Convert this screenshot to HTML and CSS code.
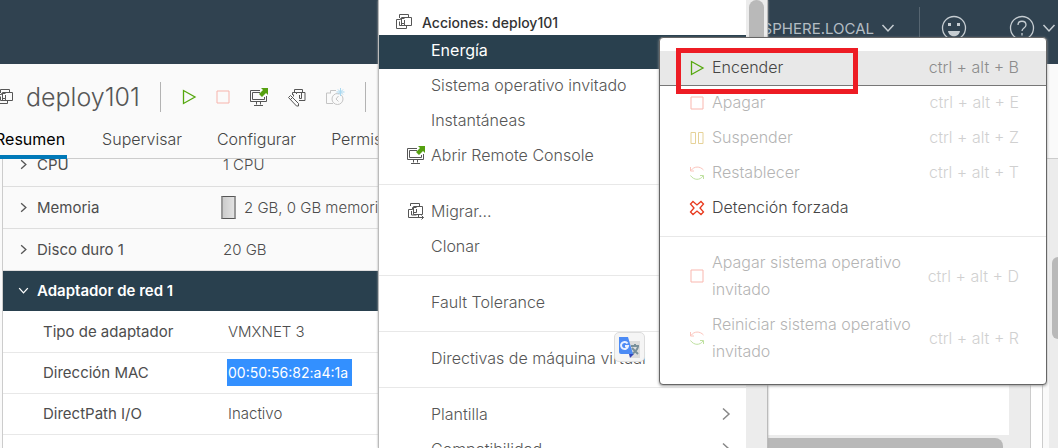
FILE: index.html
```html
<!DOCTYPE html>
<html lang="es">
<head>
<meta charset="utf-8">
<title>deploy101</title>
<link rel="stylesheet" href="styles.css">
</head>
<body>
<svg class="defs" aria-hidden="true">
  <symbol id="vm" viewBox="0 0 18 18"><path d="M4.500 5V1.500h9V4M1.500 6.500h4V5.500h4M1.500 6.500v9h10v-3M6.500 4.500h10v8h-10zM9.500 7v3.500h-3M4.500 8.500v4h4.500M9.500 10.500v2"/></symbol>
  <symbol id="play" viewBox="0 0 16 16"><path d="M2.500 1.500v13L14 8z"/></symbol>
  <symbol id="stop" viewBox="0 0 16 16"><path d="M2 2h12v12H2z"/></symbol>
  <symbol id="pause" viewBox="0 0 16 16"><path d="M2 2.500h4.500v11H2zM9.500 2.500H14v11H9.500z"/></symbol>
  <symbol id="reset" viewBox="0 0 16 16"><g stroke="#f76f5b"><path d="M2 5.500C5 1 11 1 14.500 5M1.500 2v4H5"/></g><g stroke="#60b515"><path d="M1.500 10.500C5 15.500 11 15.500 14 11M11 10.500h3.500v3.500"/></g></symbol>
  <symbol id="kill" viewBox="0 0 16 16"><path d="M4 1.500 8 5l4-3.500L14.500 4 11 8l3.500 4L12 14.500 8 11l-4 3.500L1.500 12 5 8 1.500 4z"/></symbol>
  <symbol id="console" viewBox="0 0 20 20"><path d="M11 3.500H1.500v11h16V9M11 5.500H3.500v7h12V10M7.500 15v2.500M11.500 15v2.500M5 18.500h9"/><path class="arrow" d="M12 1h7v7l-2-2-4 4-3-3 4-4z"/></symbol>
  <symbol id="down" viewBox="0 0 14 10"><path d="M1.500 2 7 8l5.500-6"/></symbol>
  <symbol id="right" viewBox="0 0 10 14"><path d="M2 1.500 8 7l-6 5.500"/></symbol>
</svg>

<div class="app">
  <header class="topbar">
    <button class="user">SPHERE.LOCAL <svg class="chev"><use href="#down"/></svg></button>
    <span class="bar-line"></span>
    <button class="feedback" aria-label="Comentarios"><svg class="round" viewBox="0 0 26 26"><circle cx="13" cy="13" r="11.500"/><path class="solid" d="M7 16h12c-1 7-11 7-12 0zM7 8h3v3H7zM16 8h3v3h-3z"/></svg></button>
    <button class="help" aria-label="Ayuda"><svg class="round" viewBox="0 0 26 26"><circle cx="13" cy="13" r="11.500"/><path d="M9 10c0-5 8-5 8 0 0 3-4 3-4 6M13 18v2.500"/></svg><svg class="chev"><use href="#down"/></svg></button>
  </header>

  <div class="titlebar">
    <svg class="vm-icon"><use href="#vm"/></svg>
    <h1>deploy101</h1>
    <div class="tools">
      <button aria-label="Encender"><svg class="i16 green"><use href="#play"/></svg></button>
      <button aria-label="Apagar" disabled><svg class="i16 red pale"><use href="#stop"/></svg></button>
      <button aria-label="Abrir consola"><svg class="i20"><use href="#console"/></svg></button>
      <button aria-label="Editar"><svg class="i20" viewBox="0 0 20 20"><path d="M7.500 5V2.500h8V5M5.500 8V5.500h4M9.500 7V5.500h8.500v8h-6M12.500 8v3.500h2M14.500 5.500v6M1.500 10.500l2-2 8 8v2.500H9.500zM3.500 12.500l2-2M3.500 13v-1M6.500 7.500v2"/></svg></button>
      <button aria-label="Crear instantánea" disabled><svg class="i20 snapshot" viewBox="0 0 20 20"><path d="M8 16.500H1.500V6H6M5.500 6V3.500H11"/><circle cx="12.500" cy="12" r="5.500"/><path d="M13.500 9 11 12l2.500 2.500"/><path class="spark" d="M15.500 1v8M11.500 5h8M13 2.500l5 5M18 2.500l-5 5"/></svg></button>
    </div>
  </div>

  <nav class="tabs">
    <a class="active" href="#resumen">Resumen</a><a href="#supervisar">Supervisar</a><a href="#configurar">Configurar</a><a href="#permisos">Permisos</a>
  </nav>

  <main class="content">
    <div class="hardware">
      <table>
        <tbody>
          <tr><th scope="row"><button><svg class="exp"><use href="#right"/></svg>CPU</button></th><td>1 CPU</td></tr>
          <tr><th scope="row"><button><svg class="exp"><use href="#right"/></svg>Memoria</button></th><td class="memory"><div><span class="meter"></span>2 GB, 0 GB memoria</div></td></tr>
          <tr><th scope="row"><button><svg class="exp"><use href="#right"/></svg>Disco duro 1</button></th><td>20 GB</td></tr>
          <tr class="open"><th scope="row" colspan="2"><button><svg class="exp"><use href="#down"/></svg>Adaptador de red 1</button></th></tr>
          <tr class="sub"><th scope="row">Tipo de adaptador</th><td>VMXNET 3</td></tr>
          <tr class="sub"><th scope="row">Dirección MAC</th><td><mark>00:50:56:82:a4:1a</mark></td></tr>
          <tr class="sub"><th scope="row">DirectPath I/O</th><td>Inactivo</td></tr>
          <tr class="sub"><th scope="row"></th><td></td></tr>
        </tbody>
      </table>
    </div>
    <div class="side"><div class="side-body"></div><div class="side-scroll"><span></span></div></div>
    <div class="gutter"></div>
    <div class="page-scroll"><span></span></div>
  </main>

  <div class="menu" role="menu" aria-label="Acciones">
    <div class="menu-list">
      <div class="menu-title"><svg class="i18"><use href="#vm"/></svg>Acciones: deploy101</div>
      <button class="item selected" role="menuitem">Energía</button>
      <button class="item" role="menuitem">Sistema operativo invitado</button>
      <button class="item" role="menuitem">Instantáneas</button>
      <button class="item with-icon" role="menuitem"><svg class="i20"><use href="#console"/></svg>Abrir Remote Console</button>
      <hr>
      <button class="item with-icon" role="menuitem"><svg class="i20" viewBox="0 0 20 20"><path d="M4.500 5V2.500h9V5M2.500 8.500v8h10v-3M2.500 8.500h4V6.500h4M7.500 5.500h9v8h-9zM10.500 8v3.500h-3M5.500 10v4h5M11 16.500h6.500M15.500 14.500l2 2-2 2"/></svg>Migrar...</button>
      <button class="item" role="menuitem">Clonar</button>
      <hr>
      <button class="item" role="menuitem">Fault Tolerance</button>
      <hr>
      <button class="item" role="menuitem">Directivas de máquina virtual</button>
      <hr>
      <button class="item" role="menuitem">Plantilla<svg class="go"><use href="#right"/></svg></button>
      <button class="item" role="menuitem">Compatibilidad<svg class="go"><use href="#right"/></svg></button>
    </div>
    <div class="menu-scroll"><span></span></div>
    <div class="translate"><svg viewBox="0 0 24 24"><path fill="#dcdcdc" d="M10 5h12v17H13z"/><path fill="none" stroke="#79909a" stroke-width="2" d="M13 10h8M17 8v2M20 10c0 4-3 6-6 8M14 12l6 6"/><path fill="#4c8bf5" d="M1 1h9l5 17H3q-2 0-2-2z"/><path fill="#3547b8" d="M11 18h5l-4 4z"/><path fill="none" stroke="#eaf1ff" stroke-width="2" d="M9.500 7.500A3.500 3.500 0 1 0 10 10H7"/></svg></div>
  </div>

  <div class="submenu" role="menu" aria-label="Energía">
    <button class="power current" role="menuitem"><svg class="i16 green"><use href="#play"/></svg><span>Encender</span><kbd>ctrl + alt + B</kbd></button>
    <button class="power" role="menuitem" disabled><svg class="i16 red"><use href="#stop"/></svg><span>Apagar</span><kbd>ctrl + alt + E</kbd></button>
    <button class="power" role="menuitem" disabled><svg class="i16 amber"><use href="#pause"/></svg><span>Suspender</span><kbd>ctrl + alt + Z</kbd></button>
    <button class="power" role="menuitem" disabled><svg class="i16"><use href="#reset"/></svg><span>Restablecer</span><kbd>ctrl + alt + T</kbd></button>
    <button class="power" role="menuitem"><svg class="i16 kill"><use href="#kill"/></svg><span>Detención forzada</span></button>
    <hr>
    <button class="power" role="menuitem" disabled><svg class="i16 red"><use href="#stop"/></svg><span>Apagar sistema operativo invitado</span><kbd>ctrl + alt + D</kbd></button>
    <button class="power" role="menuitem" disabled><svg class="i16"><use href="#reset"/></svg><span>Reiniciar sistema operativo invitado</span><kbd>ctrl + alt + R</kbd></button>
  </div>
  <div class="callout"></div>
</div>
</body>
</html>
```

FILE: styles.css
```css
* { box-sizing: border-box; }
body { margin: 0; font-family: Inter, "Open Sans", sans-serif; font-size: 16px; font-weight: 300; color: #4d4d4d; background: #fafafa; }
button { margin: 0; padding: 0; border: 0; background: none; font: inherit; color: inherit; text-align: left; }
svg { display: block; flex: none; fill: none; stroke: #565656; stroke-width: 1; }
hr { margin: 10px 0; border: 0; border-top: 1px solid #e8e8e8; }
.defs { position: absolute; width: 0; height: 0; }
.app { position: relative; height: 100vh; overflow: hidden; display: flex; flex-direction: column; }
.i16 { width: 16px; height: 16px; }
.i18 { width: 18px; height: 18px; }
.i20 { width: 20px; height: 20px; }
.arrow { fill: #55a010; stroke: none; }
.green { stroke: #55a80e; stroke-width: 1.3; }
.red { stroke: #f5503a; }
.amber { stroke: #c29100; }
.kill { stroke: #e8391d; stroke-width: 1.3; }
.pale { opacity: 0.4; }
.snapshot { stroke: #c4c4c4; }
.spark { stroke: #a9d8f0; }

.topbar { flex: none; height: 64px; padding: 0 2px 8px; display: flex; justify-content: flex-end; align-items: center; background: #304250; color: #b4bdc4; }
.topbar svg { stroke: #c6cdd2; }
.topbar button { display: flex; align-items: center; gap: 7px; }
.user { font-size: 15px; }
.topbar .user { font-weight: 400; }
.chev { width: 14px; height: 10px; stroke-width: 1.5; }
.round { width: 26px; height: 26px; stroke-width: 1.3; }
.round .solid { fill: #c6cdd2; stroke: none; }
.bar-line { height: 42px; margin: 0 21px 0 24px; border-left: 1px solid #566571; }
.feedback { margin-right: 42px; }

.titlebar { flex: none; height: 64px; padding-top: 1px; display: flex; align-items: center; }
.vm-icon { width: 18px; height: 18px; margin-left: -4px; }
h1 { margin: 0 20px 0 12px; font-size: 25px; font-weight: 300; line-height: 30px; color: #565656; }
.tools { height: 30px; padding: 0 20px; display: flex; align-items: center; gap: 18px; border: solid #b3b3b3; border-width: 0 1px; }

.tabs { flex: none; height: 31px; padding-left: 2px; display: flex; gap: 35px; border-bottom: 1px solid #ccc; }
.tabs a { color: #454545; text-decoration: none; line-height: 22px; }
.tabs .active { margin-left: -7px; padding-right: 2px; height: 31px; border-bottom: 4px solid #0079b8; font-weight: 400; color: #000; }

.content { flex: 1; min-height: 0; display: flex; overflow: hidden; }
.hardware { flex: 1; margin-left: 2px; border-left: 1px solid #ccc; background: #fff; overflow: hidden; }
table { width: 100%; margin-top: -15px; border-collapse: collapse; table-layout: fixed; font-size: 15px; }
th, td { height: 42px; padding: 0; border-bottom: 1px solid #dedede; background: #fafafa; text-align: left; font-weight: 300; }
th { width: 220px; font-weight: 400; padding-left: 15px; }
th button { display: flex; align-items: center; gap: 8px; }
.exp { width: 11px; height: 11px; stroke-width: 1.7; }
.memory div { display: flex; align-items: center; gap: 8px; }
.meter { width: 15px; height: 23px; margin-left: -2px; border: 2px solid #999; border-block: 1px solid #555; background: linear-gradient(90deg, #ccc, #e2e2e2); }
.open th { height: 41px; border: 0; background: #29404e; color: #fff; font-weight: 600; }
.open svg { stroke: #fff; }
.sub th, .sub td { height: 41px; background: #fff; border-color: #e8e8e8; }
.sub th { padding-left: 40px; }
.sub td { padding-left: 5px; }
mark { display: inline-block; margin-left: -1px; padding: 0 4px 0 1px; font-size: 14px; line-height: 27px; background: #3390ff; color: #fff; font-weight: 400; }
.side { flex: none; width: 263px; display: flex; flex-direction: column; padding-right: 21px; border-right: 1px solid #ccc; background: #ececec; }
.side-body { flex: 1; background: #fff; }
.side-scroll { height: 13px; padding: 3px 6px 0 0; }
.side-scroll span { display: block; height: 14px; border-radius: 0 8px 0 0; background: #b9b9b9; }
.gutter { flex: none; width: 12px; border-right: 1px solid #ccc; background: #fff; }
.page-scroll { flex: none; width: 15px; padding: 98px 0 0 3px; border-left: 6px solid #fafafa; background: #ececec; }
.page-scroll span { display: block; width: 12px; height: 82px; border-radius: 6px; background: #b9b9b9; }

.menu { position: absolute; left: 378px; top: 0; width: 390px; height: 100%; display: flex; overflow: hidden; border: 1px solid #bbb; border-width: 0 1px; background: #fff; color: #565656; box-shadow: 0 0 2px #aaa; }
.menu-list { flex: 1; }
.menu-title { height: 35px; padding: 9px 0 0 16px; display: flex; align-items: center; gap: 9px; font-size: 14px; font-weight: 500; color: #333; }
.item { width: 100%; height: 35px; padding: 0 15px 4px 52px; display: flex; align-items: center; }
.item.with-icon { padding-left: 27px; gap: 5px; }
.selected { height: 34px; background: #29404e; color: #fff; font-weight: 400; }
.go { width: 10px; height: 14px; margin-left: auto; stroke: #888; stroke-width: 1.5; }
.menu-scroll { width: 21px; padding: 0 3px; background: #ececec; }
.menu-scroll span { display: block; height: 80px; border-radius: 8px; background: #b9b9b9; }
.translate { position: absolute; left: 235px; top: 332px; width: 31px; height: 30px; padding: 3px; border: 1px solid #ddd; border-radius: 5px; background: #f5f5f5; }
.translate svg { width: 24px; height: 24px; stroke: none; }

.submenu { position: absolute; left: 659px; top: 37px; width: 388px; padding: 13px 0 14px; border: 1px solid #666; border-radius: 4px; background: #fff; box-shadow: 0 1px 3px #999; }
.submenu hr { margin: 10px 0 9px; }
.power { width: 100%; min-height: 35px; padding: 3px 27px 5px 29px; display: flex; align-items: center; line-height: 27px; }
.power span { flex: 1; margin-left: 7px; color: #454545; }
.power kbd { flex: none; font: inherit; color: #8c8c8c; }
.power:disabled > * { opacity: 0.4; }
.power.current { background: #e8e8e8; border-bottom: 1px solid #777; padding-bottom: 4px; }
.callout { position: absolute; left: 676px; top: 48px; width: 182px; height: 46px; border: 5px solid #ed1c24; }
```
